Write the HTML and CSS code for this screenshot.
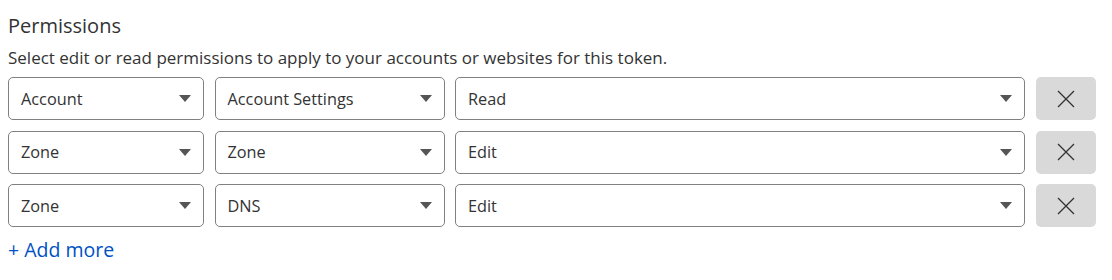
FILE: index.html
```html
<!DOCTYPE html>
<html lang="en">
<head>
    <meta charset="UTF-8">
    <title>Permissions</title>
    <link rel="stylesheet" href="styles.css">
</head>
<body>

    <h2 class="title">Permissions</h2>
    <p class="hint">Select edit or read permissions to apply to your accounts or websites for this token.</p>

    <div class="rows">
        <div class="row">
            <div class="select small"><span>Account</span><i class="caret"></i></div>
            <div class="select medium"><span>Account Settings</span><i class="caret"></i></div>
            <div class="select wide"><span>Read</span><i class="caret"></i></div>
            <button class="remove" aria-label="Remove">
                <svg width="18" height="18" viewBox="0 0 18 18"><path d="M1 1 L17 17 M17 1 L1 17" stroke="#333" stroke-width="1.3" fill="none"/></svg>
            </button>
        </div>
        <div class="row">
            <div class="select small"><span>Zone</span><i class="caret"></i></div>
            <div class="select medium"><span>Zone</span><i class="caret"></i></div>
            <div class="select wide"><span>Edit</span><i class="caret"></i></div>
            <button class="remove" aria-label="Remove">
                <svg width="18" height="18" viewBox="0 0 18 18"><path d="M1 1 L17 17 M17 1 L1 17" stroke="#333" stroke-width="1.3" fill="none"/></svg>
            </button>
        </div>
        <div class="row">
            <div class="select small"><span>Zone</span><i class="caret"></i></div>
            <div class="select medium"><span>DNS</span><i class="caret"></i></div>
            <div class="select wide"><span>Edit</span><i class="caret"></i></div>
            <button class="remove" aria-label="Remove">
                <svg width="18" height="18" viewBox="0 0 18 18"><path d="M1 1 L17 17 M17 1 L1 17" stroke="#333" stroke-width="1.3" fill="none"/></svg>
            </button>
        </div>
    </div>

    <a class="add" href="#">+ Add more</a>

</body>
</html>
```

FILE: styles.css
```css
body {
    margin: 0;
    padding: 12px 8px;
    font-family: "Open Sans", "Noto Sans", sans-serif;
    color: #333;
    background: #fff;
}

.title {
    margin: 0;
    font-size: 20px;
    font-weight: 400;
    line-height: 28px;
}

.hint {
    margin: 7px 0 8px;
    font-size: 17px;
    line-height: 22px;
}

.rows {
    display: flex;
    flex-direction: column;
    gap: 10.5px;
}

.row {
    display: flex;
    gap: 10.5px;
}

.select {
    height: 43px;
    box-sizing: border-box;
    border: 1px solid #808080;
    border-radius: 5px;
    display: flex;
    align-items: center;
    justify-content: space-between;
    padding: 0 12px 0 12px;
    font-size: 16.3px;
}

.small { width: 196px; }
.medium { width: 230px; }
.wide { width: 570px; }

.caret {
    width: 0;
    height: 0;
    border-left: 6px solid transparent;
    border-right: 6px solid transparent;
    border-top: 7px solid #555;
}

.remove {
    width: 60px;
    height: 43px;
    border: 0;
    border-radius: 5px;
    background: #d9d9d9;
    display: flex;
    align-items: center;
    justify-content: center;
    cursor: pointer;
}

.add {
    display: inline-block;
    margin-top: 9px;
    font-size: 19.5px;
    color: #0051c3;
    text-decoration: none;
}
```
